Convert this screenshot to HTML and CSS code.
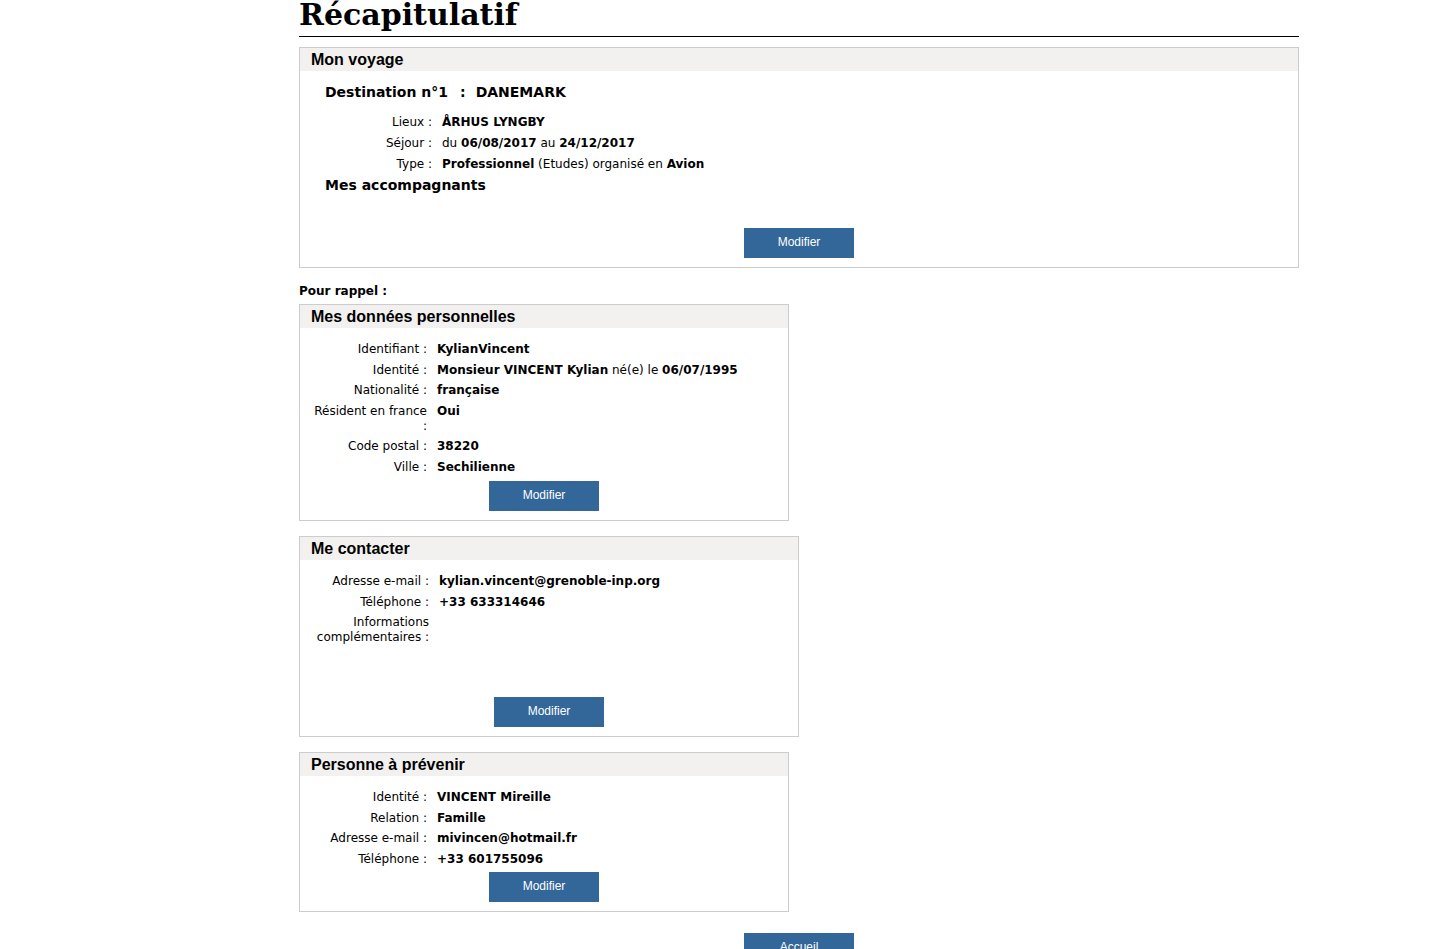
FILE: index.html
```html
<!DOCTYPE html>
<html lang="fr">
<head>
<meta charset="utf-8">
<title>Récapitulatif</title>
<link rel="stylesheet" href="styles.css">
</head>
<body>
<main class="page">
  <h1 class="title">Récapitulatif</h1>

  <section class="box box-trip">
    <h2 class="box-head">Mon voyage</h2>
    <div class="box-content">
      <h3 class="dest">Destination n°1<span class="dest-sep">:</span>DANEMARK</h3>
      <dl class="rows">
        <dt>Lieux :</dt><dd><b>ÅRHUS LYNGBY</b></dd>
        <dt>Séjour :</dt><dd>du <b>06/08/2017</b> au <b>24/12/2017</b></dd>
        <dt>Type :</dt><dd><b>Professionnel</b> (Etudes) organisé en <b>Avion</b></dd>
      </dl>
      <h3 class="sub">Mes accompagnants</h3>
    </div>
    <div class="box-actions actions-trip"><button class="btn" type="button">Modifier</button></div>
  </section>

  <p class="reminder">Pour rappel :</p>

  <section class="box box-narrow">
    <h2 class="box-head">Mes données personnelles</h2>
    <div class="box-content">
      <dl class="rows">
        <dt>Identifiant :</dt><dd><b>KylianVincent</b></dd>
        <dt>Identité :</dt><dd><b>Monsieur VINCENT Kylian</b> né(e) le <b>06/07/1995</b></dd>
        <dt>Nationalité :</dt><dd><b>française</b></dd>
        <dt>Résident en france :</dt><dd><b>Oui</b></dd>
        <dt>Code postal :</dt><dd><b>38220</b></dd>
        <dt>Ville :</dt><dd><b>Sechilienne</b></dd>
      </dl>
    </div>
    <div class="box-actions actions-personal"><button class="btn" type="button">Modifier</button></div>
  </section>

  <section class="box box-contact">
    <h2 class="box-head">Me contacter</h2>
    <div class="box-content">
      <dl class="rows">
        <dt>Adresse e-mail :</dt><dd><b>kylian.vincent@grenoble-inp.org</b></dd>
        <dt>Téléphone :</dt><dd><b>+33 633314646</b></dd>
        <dt>Informations complémentaires :</dt><dd></dd>
      </dl>
    </div>
    <div class="box-actions actions-contact"><button class="btn" type="button">Modifier</button></div>
  </section>

  <section class="box box-narrow">
    <h2 class="box-head">Personne à prévenir</h2>
    <div class="box-content">
      <dl class="rows">
        <dt>Identité :</dt><dd><b>VINCENT Mireille</b></dd>
        <dt>Relation :</dt><dd><b>Famille</b></dd>
        <dt>Adresse e-mail :</dt><dd><b>mivincen@hotmail.fr</b></dd>
        <dt>Téléphone :</dt><dd><b>+33 601755096</b></dd>
      </dl>
    </div>
    <div class="box-actions"><button class="btn" type="button">Modifier</button></div>
  </section>

  <div class="page-actions"><button class="btn" type="button">Accueil</button></div>
</main>
</body>
</html>
```

FILE: styles.css
```css
html, body {
  margin: 0;
  padding: 0;
  background: #fff;
}

body {
  font-family: "DejaVu Sans", sans-serif;
  font-size: 12px;
  color: #000;
}

.page {
  width: 1000px;
  padding-left: 299px;
}

.title {
  margin: 0 0 10px;
  padding: 0 0 6px 0;
  font-family: "DejaVu Serif", serif;
  font-size: 30px;
  line-height: 30px;
  font-weight: bold;
  border-bottom: 1px solid #000;
}

.box {
  border: 1px solid #cccccc;
  background: #fff;
}

.box-trip { width: 998px; }
.box-narrow { width: 488px; margin-bottom: 15px; }
.box-contact { width: 498px; margin-bottom: 15px; }

.box-head {
  margin: 0;
  height: 23px;
  padding: 0 11px;
  background: #f2f1f0;
  font-family: "Liberation Sans", Arial, sans-serif;
  font-size: 16px;
  font-weight: bold;
  line-height: 23px;
}

.box-content {
  padding: 14px 0 0 12px;
  --label-w: 115px;
  --row-gap: 5.5px;
}

.box-trip .box-content {
  padding: 13px 0 0 25px;
  --label-w: 107px;
  --row-gap: 6px;
}

.box-contact .box-content {
  padding-left: 14px;
}

.dest, .sub {
  margin: 0;
  font-size: 14px;
  line-height: 17px;
  font-weight: bold;
}

.dest { margin-bottom: 14px; }
.dest-sep { padding: 0 10px 0 12px; }
.sub { margin-top: 5px; }

.rows {
  display: grid;
  grid-template-columns: var(--label-w) 1fr;
  column-gap: 10px;
  row-gap: var(--row-gap);
  margin: 0;
  line-height: 15px;
}

.rows dt {
  text-align: right;
}

.rows dd {
  margin: 0;
}

.box-actions {
  display: flex;
  justify-content: center;
  margin-top: 5.5px;
  padding-bottom: 9px;
}

.actions-trip { margin-top: 34px; }
.actions-personal { margin-top: 6.5px; }
.actions-contact { margin-top: 52px; }

.btn {
  width: 110px;
  height: 30px;
  padding: 0 0 2px;
  border: none;
  border-radius: 0;
  background: #336699;
  color: #fff;
  font-family: "Liberation Sans", Arial, sans-serif;
  font-size: 12px;
  cursor: pointer;
}

.reminder {
  margin: 16px 0 5px;
  font-weight: bold;
  line-height: 15px;
}

.page-actions {
  display: flex;
  justify-content: center;
  margin-top: 21px;
}
```
